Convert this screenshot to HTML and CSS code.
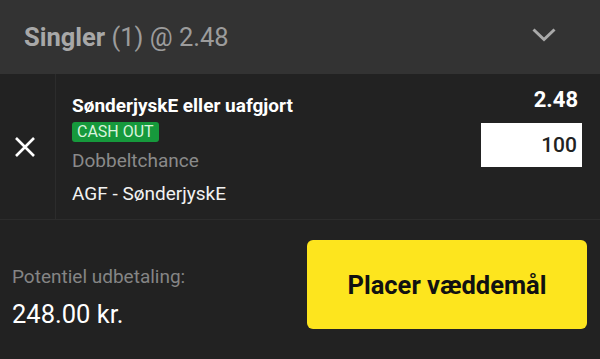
FILE: index.html
```html
<!DOCTYPE html>
<html lang="da">
<head>
<meta charset="utf-8">
<link rel="stylesheet" href="styles.css">
</head>
<body>
<div class="slip">
  <header class="head">
    <div class="head-title"><b>Singler</b> (1) @ 2.48</div>
    <svg class="chev" width="24" height="14" viewBox="0 0 24 14"><polyline points="1.5,1.5 12,11.5 22.5,1.5" fill="none" stroke="#a9a9a9" stroke-width="3"/></svg>
  </header>
  <section class="bet">
    <div class="remove">
      <svg width="22" height="20" viewBox="0 0 22 20"><path d="M2 1 L20 19 M20 1 L2 19" stroke="#fff" stroke-width="2.6" fill="none"/></svg>
    </div>
    <div class="info">
      <div class="sel">SønderjyskE eller uafgjort</div>
      <div class="badge">CASH OUT</div>
      <div class="market">Dobbeltchance</div>
      <div class="event">AGF - SønderjyskE</div>
    </div>
    <div class="stake">
      <div class="odds">2.48</div>
      <div class="input">100</div>
    </div>
  </section>
  <footer class="foot">
    <div class="payout">
      <div class="pay-label">Potentiel udbetaling:</div>
      <div class="pay-amount">248.00 kr.</div>
    </div>
    <button class="place">Placer væddemål</button>
  </footer>
</div>
</body>
</html>
```

FILE: styles.css
```css
* { box-sizing: border-box; }
html, body { margin: 0; padding: 0; }
body {
  background: #222222;
  font-family: Roboto, "Liberation Sans", sans-serif;
  width: 600px;
  height: 359px;
  overflow: hidden;
}
.slip { display: flex; flex-direction: column; }
.head {
  height: 74px;
  background: #333333;
  display: flex;
  align-items: center;
  justify-content: space-between;
  padding: 0 44px 0 24px;
}
.head-title {
  color: #9c9c9c;
  font-size: 25.5px;
  line-height: 30px;
}
.head-title b { color: #a8a8a8; font-weight: 700; }
.chev { margin-top: -5px; }
.bet {
  height: 146px;
  display: flex;
  border-bottom: 1px solid #2c2c2c;
}
.remove {
  width: 56px;
  border-right: 1px solid #2c2c2c;
  display: flex;
  align-items: center;
  padding-left: 14px;
}
.info {
  flex: 1;
  padding: 21px 0 0 16px;
  display: flex;
  flex-direction: column;
  align-items: flex-start;
}
.sel {
  color: #fff;
  font-weight: 700;
  font-size: 19px;
  line-height: 22px;
}
.badge {
  margin-top: 5px;
  height: 20px;
  line-height: 20px;
  padding: 0 5px;
  background: #16993c;
  color: #d9f3dc;
  font-size: 16px;
  border-radius: 3px;
}
.market {
  margin-top: 8px;
  color: #8a8a8a;
  font-size: 19px;
  line-height: 22px;
}
.event {
  margin-top: 11px;
  color: #f2f2f2;
  font-size: 19px;
  line-height: 22px;
}
.stake {
  padding: 13px 18px 0 0;
  display: flex;
  flex-direction: column;
  align-items: flex-end;
}
.odds {
  color: #fff;
  font-weight: 700;
  font-size: 22px;
  line-height: 26px;
  margin-right: 4px;
}
.input {
  margin-top: 10px;
  width: 101px;
  height: 44px;
  background: #fff;
  color: #222;
  font-size: 21px;
  font-weight: 500;
  line-height: 44px;
  text-align: right;
  padding-right: 5px;
}
.foot {
  height: 139px;
  display: flex;
  justify-content: space-between;
  align-items: flex-start;
  padding: 20px 13px 0 12px;
}
.payout { padding-top: 26px; }
.pay-label {
  color: #858585;
  font-size: 19px;
  line-height: 22px;
}
.pay-amount {
  margin-top: 12px;
  color: #fff;
  font-size: 25.5px;
  line-height: 28px;
}
.place {
  width: 280px;
  height: 89px;
  border: 0;
  border-radius: 6px;
  background: #fde51e;
  color: #111;
  font-family: inherit;
  font-weight: 700;
  font-size: 25.5px;
  padding: 0;
}
```
